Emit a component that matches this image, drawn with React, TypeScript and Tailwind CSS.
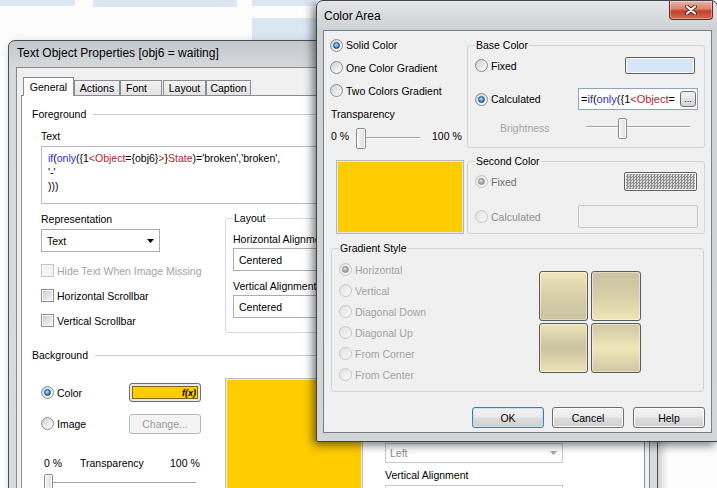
import React from "react";

type RP = { checked?: boolean; disabled?: boolean };

function Radio({ checked = false, disabled = false }: RP) {
  return (
    <span
      className={
        disabled
          ? "flex h-[13px] w-[13px] shrink-0 items-center justify-center rounded-full border border-[#c4c6c8] bg-[linear-gradient(135deg,#e2e2e2,#fafafa)]"
          : "flex h-[13px] w-[13px] shrink-0 items-center justify-center rounded-full border border-[#8a8c8e] bg-[linear-gradient(135deg,#cdd0d3,#ffffff)]"
      }
    >
      {checked ? (
        <span
          className={
            disabled
              ? "h-[7px] w-[7px] rounded-full border border-[#8f8f8f] bg-[radial-gradient(circle_at_40%_35%,#e6e6e6,#a3a3a3_60%,#858585)]"
              : "h-[7px] w-[7px] rounded-full border border-[#1d4f80] bg-[radial-gradient(circle_at_40%_35%,#bfe7ff,#3a8fd6_55%,#1a5591)]"
          }
        />
      ) : null}
    </span>
  );
}

function Check({ disabled = false }: { disabled?: boolean }) {
  return disabled ? (
    <span className="block h-[13px] w-[13px] shrink-0 border border-[#c6c6c6] bg-[#f3f3f3]" />
  ) : (
    <span className="flex h-[13px] w-[13px] shrink-0 items-center justify-center border border-[#8e8f8f] bg-white">
      <span className="h-[9px] w-[9px] bg-[linear-gradient(135deg,#c9cdd3,#f6f6f6)]" />
    </span>
  );
}

function Btn({
  children,
  def = false,
  className = "",
}: {
  children?: React.ReactNode;
  def?: boolean;
  className?: string;
}) {
  return (
    <div
      className={
        (def
          ? "border-[#3c7fb1] shadow-[inset_0_0_0_1px_#c4e5f6] "
          : "border-[#707070] shadow-[inset_0_0_0_1px_#fbfbfb] ") +
        "flex items-center justify-center rounded-[3px] border bg-[linear-gradient(#f3f3f3_0%,#ebebeb_48%,#dddddd_52%,#d0d0d0_100%)] " +
        className
      }
    >
      {children}
    </div>
  );
}

function Arrow({ gray = false }: { gray?: boolean }) {
  return (
    <svg width="7" height="4" viewBox="0 0 7 4" className="shrink-0">
      <path d="M0 0h7L3.5 4z" fill={gray ? "#a8a8a8" : "#000"} />
    </svg>
  );
}

function Thumb({ className = "" }: { className?: string }) {
  return (
    <span
      className={
        "absolute rounded-[2px] border border-[#8b8b8b] bg-[linear-gradient(90deg,#f7f7f7,#dcdcdc)] shadow-[inset_0_0_0_1px_#ffffff] " +
        className
      }
    />
  );
}

function Track({ className = "" }: { className?: string }) {
  return (
    <span
      className={
        "absolute h-[2px] border-t border-b border-t-[#a3a3a3] border-b-[#ffffff] " +
        className
      }
    />
  );
}

const BLUE = "text-[#2a2ad0]";
const RED = "text-[#a8282e]";

export default function App() {
  return (
    <div className="relative h-[488px] w-[717px] overflow-hidden bg-[#fcfcfc] font-['Liberation_Sans',Arial,sans-serif] text-[10.5px] leading-[14px] text-black">
      {/* desktop behind */}
      <div className="flex h-[7px] items-start">
        <div className="h-[6px] w-[75px] bg-[#dbe6f3]" />
        <div className="ml-[18px] h-[7px] w-[144px] bg-[#dbe6f3]" />
        <div className="ml-[15px] h-[6px] w-[64px] bg-[#dbe6f3]" />
      </div>
      <div className="ml-[252px] mt-[11px] h-[22px] w-[64px] bg-[#dbe6f3]" />

      {/* back window: Text Object Properties */}
      <div className="absolute left-[8px] top-[40px] flex h-[470px] w-[650px] flex-col rounded-t-[7px] border border-[#4b5056] bg-[linear-gradient(#c3c7cc,#d6d9dc_26px,#d9dcdf)] shadow-[3px_3px_10px_rgba(0,0,0,0.25)]">
        <div className="flex h-[26px] shrink-0 items-center pb-[2px] pl-[8px] text-[12px]">
          Text Object Properties [obj6 = waiting]
        </div>
        <div className="mx-[7px] flex-1 border border-[#898989] bg-[#f0f0f0] pl-[4px] pt-[9px]">
          {/* tabs */}
          <div className="flex h-[18px] items-end pl-[2px]">
            <div className="relative z-10 -mb-[1px] flex h-[19px] w-[51px] items-center justify-center border border-b-0 border-[#898c95] bg-white">
              General
            </div>
            <div className="flex h-[15px] w-[46px] items-center justify-center border border-b-0 border-[#898c95] bg-[linear-gradient(#f3f3f3,#e2e2e2)]">
              Actions
            </div>
            <div className="flex h-[15px] w-[42px] items-center border border-b-0 border-[#898c95] bg-[linear-gradient(#f3f3f3,#e2e2e2)] pl-[5px]">
              Font
            </div>
            <div className="ml-[1px] flex h-[15px] w-[43px] items-center justify-center border border-b-0 border-[#898c95] bg-[linear-gradient(#f3f3f3,#e2e2e2)]">
              Layout
            </div>
            <div className="flex h-[15px] w-[45px] items-center justify-center border border-b-0 border-[#898c95] bg-[linear-gradient(#f3f3f3,#e2e2e2)]">
              Caption
            </div>
          </div>
          {/* tab page */}
          <div className="h-[420px] w-[624px] border border-[#898c95] bg-white">
            <div className="mt-[11px] flex h-[14px] items-center pl-[10px] pr-[8px]">
              <span>Foreground</span>
              <span className="ml-[7px] h-px flex-1 bg-[#c9cdd1]" />
            </div>
            <div className="mt-[8px] pl-[19px]">Text</div>
            <div className="ml-[19px] mt-[3px] h-[58px] w-[590px] whitespace-nowrap border border-[#b9bcc2] pl-[6px] pt-[4px]">
              <div>
                <span className={BLUE}>if</span>(<span className={BLUE}>only</span>
                {"({1"}
                <span className={RED}>{"<Object"}</span>
                {"={obj6}"}
                <span className={RED}>{">"}</span>
                {"}"}
                <span className={RED}>State</span>
                {")='broken','broken',"}
              </div>
              <div>{"'-'"}</div>
              <div>{")))"}</div>
            </div>

            <div className="mt-[7px] flex">
              <div className="w-[203px] shrink-0 pl-[19px]">
                <div className="mt-[1px]">Representation</div>
                <div className="mt-[3px] flex h-[23px] w-[119px] items-center justify-between border border-[#abadb3] bg-white pl-[5px] pr-[5px]">
                  <span>Text</span>
                  <Arrow />
                </div>
                <div className="mt-[6px] flex h-[25px] items-center">
                  <Check disabled />
                  <span className="ml-[3px] text-[#a3a3a3]">Hide Text When Image Missing</span>
                </div>
                <div className="flex h-[25px] items-center">
                  <Check />
                  <span className="ml-[3px]">Horizontal Scrollbar</span>
                </div>
                <div className="flex h-[25px] items-center">
                  <Check />
                  <span className="ml-[3px]">Vertical Scrollbar</span>
                </div>
              </div>
              <fieldset className="w-[410px] rounded-[3px] border border-[#d5d8db] pb-[10px] pl-[7px] pt-[7px]">
                <legend className="px-[1px] leading-[14px]">Layout</legend>
                <div>Horizontal Alignment</div>
                <div className="mt-[2px] flex h-[23px] w-[300px] items-center border border-[#abadb3] bg-white pl-[5px]">
                  Centered
                </div>
                <div className="mt-[8px]">Vertical Alignment</div>
                <div className="mt-[2px] flex h-[23px] w-[300px] items-center border border-[#abadb3] bg-white pl-[5px]">
                  Centered
                </div>
              </fieldset>
            </div>

            <div className="mt-[15px] flex h-[14px] items-center pl-[10px] pr-[8px]">
              <span>Background</span>
              <span className="ml-[7px] h-px flex-1 bg-[#c9cdd1]" />
            </div>

            <div className="flex">
              <div className="w-[203px] shrink-0 pl-[19px]">
                <div className="mt-[19px] flex h-[23px] items-center">
                  <div className="flex w-[88px] items-center">
                    <Radio checked />
                    <span className="ml-[3px]">Color</span>
                  </div>
                  <div className="flex h-[19px] w-[72px] rounded-[3px] border border-[#6e6e6e] bg-[#e8e8e8] p-[2px]">
                    <div className="flex flex-1 items-center justify-end border border-[#7a6a20] bg-[#ffcc00] pr-[1px] text-[9px] font-bold italic leading-[10px]">
                      f(x)
                    </div>
                  </div>
                </div>
                <div className="mt-[9px] flex h-[21px] items-center">
                  <div className="flex w-[88px] items-center">
                    <Radio />
                    <span className="ml-[3px]">Image</span>
                  </div>
                  <div className="flex h-[20px] w-[72px] items-center justify-center rounded-[3px] border border-[#b5b8ba] bg-[#f4f4f4] text-[#9a9a9a]">
                    Change...
                  </div>
                </div>
                <div className="mt-[22px] flex h-[14px] pl-[3px]">
                  <span className="w-[36px]">0 %</span>
                  <span className="w-[90px]">Transparency</span>
                  <span>100 %</span>
                </div>
                <div className="relative ml-[3px] mt-[4px] h-[20px] w-[152px]">
                  <Track className="left-[4px] right-0 top-[8px]" />
                  <Thumb className="left-0 top-0 h-[20px] w-[9px]" />
                </div>
              </div>
              <div className="mt-[16px] h-[130px] w-[138px] shrink-0 border border-[#bdbdbd] bg-[#ececec] p-[1px]">
                <div className="h-full w-full bg-[#ffcc00]" />
              </div>
              <div className="ml-[22px] w-[178px] shrink-0">
                <div className="mt-[60px] text-[#a0a0a0]">Horizontal Alignment</div>
                <div className="mt-[7px] flex h-[20px] items-center justify-between border border-[#c9c9c9] bg-white pl-[4px] pr-[5px] text-[#8e8e8e]">
                  <span>Left</span>
                  <Arrow gray />
                </div>
                <div className="mt-[5px]">Vertical Alignment</div>
                <div className="mt-[3px] h-[20px] border border-[#c9c9c9] bg-white" />
              </div>
            </div>
          </div>
        </div>
      </div>

      {/* front dialog: Color Area */}
      <div className="absolute left-[316px] top-0 flex h-[442px] w-[402px] flex-col rounded-t-[7px] rounded-b-[2px] border border-[#3f444a] bg-[linear-gradient(#e3e5e8,#cfd2d5_29px,#d3d6d9)] shadow-[-3px_3px_10px_rgba(0,0,0,0.55)]">
        <div className="flex h-[29px] shrink-0 items-start">
          <span className="ml-[7px] mt-[8px] text-[12px] leading-[15px]">Color Area</span>
          <div className="ml-auto mr-[4px] flex h-[19px] w-[44px] items-center justify-center rounded-b-[4px] border border-t-0 border-[#6b2a20] bg-[linear-gradient(#ecb7aa_0%,#d97f6b_45%,#c2412d_55%,#d6674f_100%)] shadow-[inset_0_0_0_1px_rgba(255,255,255,0.35)]">
            <svg width="12" height="10" viewBox="0 0 12 10">
              <path d="M2 1.5 L10 8.5 M10 1.5 L2 8.5" stroke="#4a2019" strokeWidth="3.8" strokeLinecap="round" />
              <path d="M2 1.5 L10 8.5 M10 1.5 L2 8.5" stroke="#ffffff" strokeWidth="2.2" strokeLinecap="round" />
            </svg>
          </div>
        </div>
        <div className="ml-[6px] h-[403px] w-[389px] border border-[#7b7f84] bg-[#f0f0f0]">
          {/* Row A */}
          <div className="flex items-start">
            <div className="w-[143px] shrink-0 pl-[6px] pt-[3px]">
              <div className="flex h-[22px] items-center">
                <Radio checked />
                <span className="ml-[3px]">Solid Color</span>
              </div>
              <div className="flex h-[23px] items-center">
                <Radio />
                <span className="ml-[3px]">One Color Gradient</span>
              </div>
              <div className="flex h-[23px] items-center">
                <Radio />
                <span className="ml-[3px]">Two Colors Gradient</span>
              </div>
              <div className="flex h-[23px] items-center pl-[1px]">Transparency</div>
              <div className="flex h-[23px] items-start pl-[1px]">
                <span className="mt-[4px] w-[25px]">0 %</span>
                <div className="relative mt-[3px] h-[22px] w-[64px]">
                  <Track className="left-[4px] right-0 top-[9px]" />
                  <Thumb className="left-0 top-0 h-[21px] w-[10px]" />
                </div>
                <span className="ml-[12px] mt-[4px]">100 %</span>
              </div>
            </div>
            <fieldset className="mt-[7px] w-[238px] shrink-0 rounded-[3px] border border-[#d3d3d3] pb-[7px] pl-[7px] pt-[2px]">
              <legend className="px-[1px] leading-[14px]">Base Color</legend>
              <div className="flex h-[23px] items-center">
                <Radio />
                <span className="ml-[3px]">Fixed</span>
                <div className="ml-auto mr-[9px] flex h-[17px] w-[70px] rounded-[2px] border border-[#5f5f5f] bg-white p-[1px]">
                  <div className="flex-1 bg-[#d6e6f8]" />
                </div>
              </div>
              <div className="mt-[11px] flex h-[22px] items-center">
                <Radio checked />
                <span className="ml-[3px]">Calculated</span>
                <div className="relative ml-auto mr-[6px] h-[22px] w-[120px] overflow-hidden whitespace-nowrap border border-[#8fa3bb] bg-white pl-[2px] pt-[3px] text-[11px] leading-[14px]">
                  <div>
                    ={""}
                    <span className={BLUE}>if</span>(<span className={BLUE}>only</span>
                    {"({1"}
                    <span className={RED}>{"<Object"}</span>
                    {"="}
                  </div>
                  <div>
                    {"{obj6}"}
                    <span className={RED}>{">"}</span>
                    {"}"}
                    <span className={RED}>State</span>
                    {")='broken'"}
                  </div>
                  <div className="absolute right-[1px] top-[2px] flex h-[16px] w-[16px] items-end justify-center rounded-[3px] border border-[#707070] bg-[linear-gradient(#f3f3f3,#d6d6d6)] pb-[3px] text-[9px] leading-[8px]">
                    ...
                  </div>
                </div>
              </div>
              <div className="mt-[6px] flex h-[24px] items-center">
                <span className="ml-[25px] text-[#a4a4a4]">Brightness</span>
                <div className="relative ml-auto mr-[14px] h-[22px] w-[104px]">
                  <Track className="left-0 right-0 top-[9px]" />
                  <Thumb className="left-[32px] top-[1px] h-[21px] w-[9px]" />
                </div>
              </div>
            </fieldset>
          </div>

          {/* Row B */}
          <div className="mt-[6px] flex items-start">
            <div className="ml-[12px] mt-[6px] h-[74px] w-[128px] shrink-0 border border-[#b8b8b8] bg-[#e6e6e6] p-[1px]">
              <div className="h-full w-full bg-[#ffcc00]" />
            </div>
            <fieldset className="ml-[3px] w-[238px] shrink-0 rounded-[3px] border border-[#d3d3d3] pb-[5px] pl-[7px] pt-[2px]">
              <legend className="px-[1px] leading-[14px]">Second Color</legend>
              <div className="flex h-[23px] items-center">
                <Radio checked disabled />
                <span className="ml-[3px] text-[#6f6f6f]">Fixed</span>
                <div className="ml-auto mr-[7px] flex h-[19px] w-[73px] rounded-[2px] border border-[#5f5f5f] bg-white p-[1px]">
                  <div className="flex-1 bg-[repeating-conic-gradient(#8c8c8c_0_25%,#dadada_0_50%)] bg-[length:3px_3px]" />
                </div>
              </div>
              <div className="mt-[12px] flex h-[23px] items-center">
                <Radio disabled />
                <span className="ml-[3px] text-[#8e8e8e]">Calculated</span>
                <div className="ml-auto mr-[6px] h-[23px] w-[120px] rounded-[2px] border border-[#c6c6c6] bg-[#f0f0f0]" />
              </div>
            </fieldset>
          </div>

          {/* Row C */}
          <fieldset className="ml-[7px] mt-[7px] w-[373px] rounded-[3px] border border-[#d3d3d3] pb-[6px] pl-[7px] pt-[4px]">
            <legend className="px-[1px] leading-[14px]">Gradient Style</legend>
            <div className="flex items-start">
              <div className="w-[200px] shrink-0 text-[#a2a2a2]">
                <div className="flex h-[21px] items-center">
                  <Radio checked disabled />
                  <span className="ml-[3px]">Horizontal</span>
                </div>
                <div className="flex h-[21px] items-center">
                  <Radio disabled />
                  <span className="ml-[3px]">Vertical</span>
                </div>
                <div className="flex h-[21px] items-center">
                  <Radio disabled />
                  <span className="ml-[3px]">Diagonal Down</span>
                </div>
                <div className="flex h-[21px] items-center">
                  <Radio disabled />
                  <span className="ml-[3px]">Diagonal Up</span>
                </div>
                <div className="flex h-[21px] items-center">
                  <Radio disabled />
                  <span className="ml-[3px]">From Corner</span>
                </div>
                <div className="flex h-[21px] items-center">
                  <Radio disabled />
                  <span className="ml-[3px]">From Center</span>
                </div>
              </div>
              <div className="mt-[12px] grid grid-cols-[49px_50px] gap-x-[3px] gap-y-[2px]">
                <div className="h-[50px] rounded-[3px] border border-[#5b5b5b] bg-[linear-gradient(#efe6b9,#d3caa6_60%,#cbc2a0)] shadow-[inset_0_0_0_1px_rgba(255,255,255,0.45)]" />
                <div className="h-[50px] rounded-[3px] border border-[#5b5b5b] bg-[linear-gradient(#cbc2a0,#d3caa6_40%,#efe6b9)] shadow-[inset_0_0_0_1px_rgba(255,255,255,0.45)]" />
                <div className="h-[50px] rounded-[3px] border border-[#5b5b5b] bg-[linear-gradient(#ece3b6,#cbc3a1_50%,#ece3b6)] shadow-[inset_0_0_0_1px_rgba(255,255,255,0.45)]" />
                <div className="h-[50px] rounded-[3px] border border-[#5b5b5b] bg-[linear-gradient(#d0c7a4,#f0e7b9_50%,#d0c7a4)] shadow-[inset_0_0_0_1px_rgba(255,255,255,0.45)]" />
              </div>
            </div>
          </fieldset>

          {/* Row D */}
          <div className="mt-[15px] flex justify-end pr-[6px]">
            <Btn def className="h-[21px] w-[72px]">OK</Btn>
            <Btn className="ml-[8px] h-[21px] w-[72px]">Cancel</Btn>
            <Btn className="ml-[9px] h-[21px] w-[72px]">Help</Btn>
          </div>
        </div>
      </div>
    </div>
  );
}
